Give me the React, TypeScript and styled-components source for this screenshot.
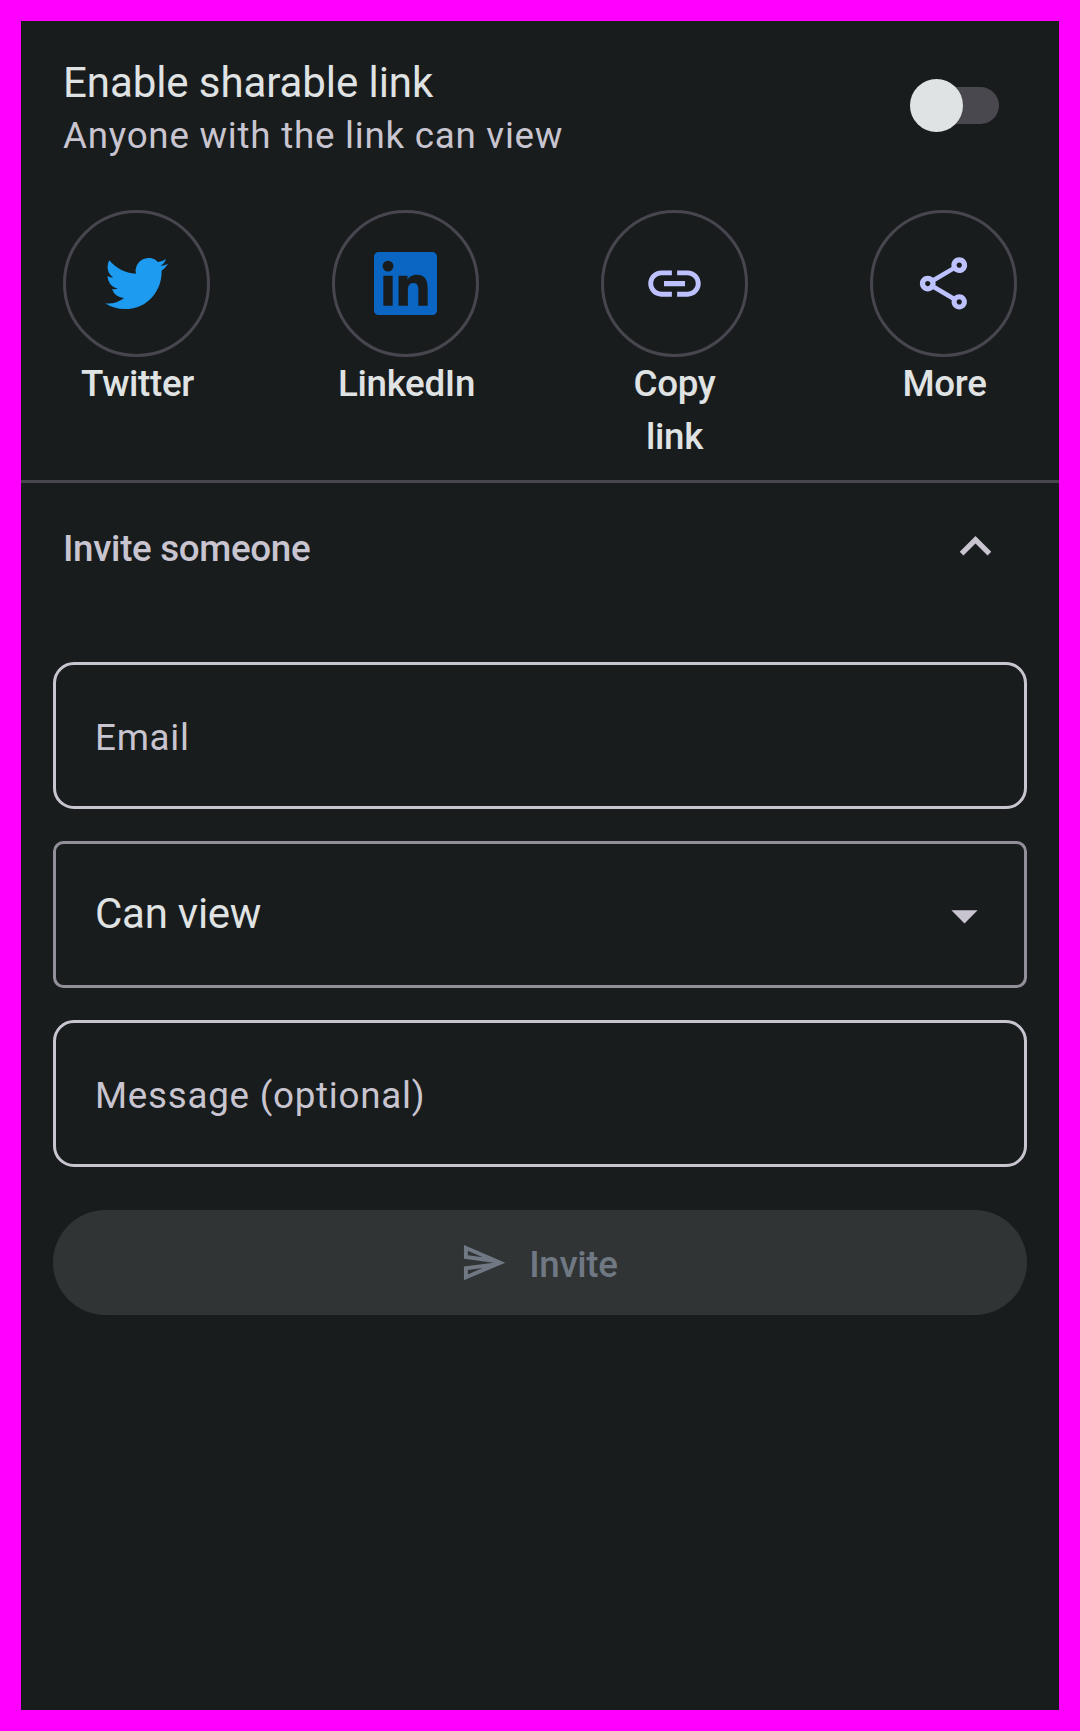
import React, { useState } from "react";
import styled, { createGlobalStyle } from "styled-components";

const colors = {
  frame: "#ff00ff",
  surface: "#191c1d",
  text: "#e0e3e3",
  muted: "#c8c5d0",
  outline: "#928f9a",
  outlineDim: "#47464f",
  track: "#48484e",
  accent: "#bdc2ff",
  disabled: "#313435",
  disabledText: "#6f7883",
};

const GlobalStyle = createGlobalStyle`
  * { box-sizing: border-box; }
  body { margin: 0; background: ${colors.frame}; }
  button, input { font: inherit; letter-spacing: inherit; color: inherit; background: none; border: 0; padding: 0; margin: 0; outline: 0; }
  svg { display: block; flex: none; }
`;

const Frame = styled.div`
  width: 1080px;
  height: 1731px;
  padding: 21px;
  background: ${colors.frame};
  font-family: Roboto, "Liberation Sans", sans-serif;
  font-size: 36.75px;
`;

const Sheet = styled.main`
  display: flex;
  flex-direction: column;
  height: 100%;
  background: ${colors.surface};
  color: ${colors.text};
`;

const LinkRow = styled.section`
  display: flex;
  align-items: flex-start;
  justify-content: space-between;
  height: 189px;
  padding: 31px 60px 0 42px;
`;

const LinkTitle = styled.div`
  font-size: 42px;
  line-height: 61px;
  letter-spacing: -0.08px;
`;

const LinkHint = styled.div`
  line-height: 46px;
  letter-spacing: 0.75px;
  color: ${colors.muted};
`;

const Switch = styled.button`
  display: flex;
  align-items: center;
  width: 89px;
  height: 53px;
  margin-top: 27px;
`;

const Track = styled.span<{ $on: boolean }>`
  display: flex;
  align-items: center;
  justify-content: ${(p) => (p.$on ? "flex-end" : "flex-start")};
  width: 100%;
  height: 37px;
  border-radius: 19px;
  background: ${(p) => (p.$on ? colors.accent : colors.track)};
`;

const Thumb = styled.span`
  flex: none;
  width: 53px;
  height: 53px;
  border-radius: 50%;
  background: ${colors.text};
`;

const Targets = styled.section`
  display: flex;
  justify-content: space-between;
  height: 273px;
  padding: 0 42px;
  border-bottom: 3px solid ${colors.outlineDim};
`;

const Target = styled.div`
  display: flex;
  flex-direction: column;
  align-items: center;
  width: 147px;
`;

const Circle = styled.button<{ $color: string }>`
  display: grid;
  place-items: center;
  width: 147px;
  height: 147px;
  border: 3px solid ${colors.outlineDim};
  border-radius: 50%;
  color: ${(p) => p.$color};
`;

const TargetLabel = styled.span<{ $wrapped: boolean }>`
  width: 112px;
  display: flex;
  justify-content: center;
  text-align: center;
  font-weight: 500;
  line-height: 53px;
  letter-spacing: -0.33px;
  padding-left: ${(p) => (p.$wrapped ? 0 : 2)}px;
  white-space: pre-line;
`;

const InviteHeader = styled.header`
  display: flex;
  align-items: center;
  justify-content: space-between;
  height: 131px;
  padding: 0 52px 0 42px;
  font-weight: 500;
  letter-spacing: -0.33px;
  color: ${colors.muted};

  svg {
    margin-bottom: 4px;
  }
`;

const Form = styled.form`
  display: flex;
  flex-direction: column;
  gap: 32px;
  padding: 48px 32px 0;
`;

const Field = styled.label<{ $select?: boolean }>`
  display: flex;
  align-items: center;
  justify-content: space-between;
  height: 147px;
  padding: ${(p) => (p.$select ? "0 28px 2px 39px" : "4px 39px 0")};
  border: 3px solid ${(p) => (p.$select ? colors.outline : colors.muted)};
  border-radius: ${(p) => (p.$select ? 10.5 : 21)}px;
  font-size: ${(p) => (p.$select ? 42 : 36.75)}px;
  letter-spacing: ${(p) => (p.$select ? -0.25 : 0.74)}px;
  color: ${(p) => (p.$select ? colors.text : colors.muted)};

  svg {
    margin-top: 3px;
    color: ${colors.muted};
  }
`;

const InviteButton = styled.button`
  display: flex;
  align-items: center;
  justify-content: center;
  gap: 21.5px;
  height: 105px;
  margin-top: 11px;
  padding-right: 2px;
  border-radius: 53px;
  background: ${colors.disabled};
  color: ${colors.disabledText};
  font-weight: 500;
  letter-spacing: -0.35px;
`;

const ButtonText = styled.span`
  padding-top: 4px;
`;

const paths = {
  twitter:
    "M23.953 4.57a10 10 0 01-2.825.775 4.958 4.958 0 002.163-2.723c-.951.555-2.005.959-3.127 1.184a4.92 4.92 0 00-8.384 4.482C7.69 8.095 4.067 6.13 1.64 3.162a4.822 4.822 0 00-.666 2.475c0 1.71.87 3.213 2.188 4.096a4.904 4.904 0 01-2.228-.616v.06a4.923 4.923 0 003.946 4.827 4.996 4.996 0 01-2.212.085 4.936 4.936 0 004.604 3.417 9.867 9.867 0 01-6.102 2.105c-.39 0-.779-.023-1.17-.067a13.995 13.995 0 007.557 2.209c9.053 0 13.998-7.496 13.998-13.985 0-.21 0-.42-.015-.63A9.935 9.935 0 0024 4.59z",
  linkedin:
    "M20.447 20.452h-3.554v-5.569c0-1.328-.027-3.037-1.852-3.037-1.853 0-2.136 1.445-2.136 2.939v5.667H9.351V9h3.414v1.561h.046c.477-.9 1.637-1.85 3.37-1.85 3.601 0 4.267 2.37 4.267 5.455v6.286zM5.337 7.433a2.062 2.062 0 01-2.063-2.065 2.064 2.064 0 112.063 2.065zm1.782 13.019H3.555V9h3.564v11.452zM22.225 0H1.771C.792 0 0 .774 0 1.729v20.542C0 23.227.792 24 1.771 24h20.451C23.2 24 24 23.227 24 22.271V1.729C24 .774 23.2 0 22.222 0h.003z",
  link: "M3.9 12c0-1.71 1.39-3.1 3.1-3.1h4V7H7c-2.76 0-5 2.24-5 5s2.24 5 5 5h4v-1.9H7c-1.71 0-3.1-1.39-3.1-3.1zM8 13h8v-2H8v2zm9-6h-4v1.9h4c1.71 0 3.1 1.39 3.1 3.1s-1.39 3.1-3.1 3.1h-4V17h4c2.76 0 5-2.24 5-5s-2.24-5-5-5z",
  share:
    "M18 16.08c-.76 0-1.44.3-1.96.77L8.91 12.7c.05-.23.09-.46.09-.7s-.04-.47-.09-.7l7.05-4.11c.54.5 1.25.81 2.04.81 1.66 0 3-1.34 3-3s-1.34-3-3-3-3 1.34-3 3c0 .24.04.47.09.7L8.04 9.81C7.5 9.31 6.79 9 6 9c-1.66 0-3 1.34-3 3s1.34 3 3 3c.79 0 1.5-.31 2.04-.81l7.12 4.16c-.05.21-.08.43-.08.65 0 1.61 1.31 2.92 2.92 2.92s2.92-1.31 2.92-2.92c0-1.61-1.31-2.92-2.92-2.92zM18 4c.55 0 1 .45 1 1s-.45 1-1 1-1-.45-1-1 .45-1 1-1zM6 13c-.55 0-1-.45-1-1s.45-1 1-1 1 .45 1 1-.45 1-1 1zm12 7.02c-.55 0-1-.45-1-1s.45-1 1-1 1 .45 1 1-.45 1-1 1z",
  less: "M12 8l-6 6 1.41 1.41L12 10.83l4.59 4.58L18 14z",
  drop: "M7 10l5 5 5-5z",
  send: "M4.01 6.03l7.51 3.22-7.52-1 .01-2.22m7.5 8.72L4 17.97v-2.22l7.51-1M2.01 3L2 10l15 2-15 2 .01 7L23 12 2.01 3z",
};

function Icon({ name, size = 63 }: { name: keyof typeof paths; size?: number }) {
  return (
    <svg width={size} height={size} viewBox="0 0 24 24" fill="currentColor" aria-hidden="true">
      <path d={paths[name]} />
    </svg>
  );
}

const targets: { label: string; icon: keyof typeof paths; color: string }[] = [
  { label: "Twitter", icon: "twitter", color: "#1d9bf0" },
  { label: "LinkedIn", icon: "linkedin", color: "#0a66c2" },
  { label: "Copy\nlink", icon: "link", color: colors.accent },
  { label: "More", icon: "share", color: colors.accent },
];

export default function App() {
  const [on, setOn] = useState(false);
  return (
    <Frame>
      <GlobalStyle />
      <Sheet>
        <LinkRow>
          <div>
            <LinkTitle>Enable sharable link</LinkTitle>
            <LinkHint>Anyone with the link can view</LinkHint>
          </div>
          <Switch role="switch" aria-checked={on} onClick={() => setOn(!on)}>
            <Track $on={on}>
              <Thumb />
            </Track>
          </Switch>
        </LinkRow>
        <Targets>
          {targets.map((t) => (
            <Target key={t.label}>
              <Circle $color={t.color}>
                <Icon name={t.icon} />
              </Circle>
              <TargetLabel $wrapped={t.label.includes("\n")}>{t.label}</TargetLabel>
            </Target>
          ))}
        </Targets>
        <InviteHeader>
          <span>Invite someone</span>
          <Icon name="less" />
        </InviteHeader>
        <Form onSubmit={(e) => e.preventDefault()}>
          <Field>
            <span>Email</span>
          </Field>
          <Field $select>
            <span>Can view</span>
            <Icon name="drop" />
          </Field>
          <Field>
            <span>Message (optional)</span>
          </Field>
          <InviteButton type="button">
            <Icon name="send" size={47.25} />
            <ButtonText>Invite</ButtonText>
          </InviteButton>
        </Form>
      </Sheet>
    </Frame>
  );
}
